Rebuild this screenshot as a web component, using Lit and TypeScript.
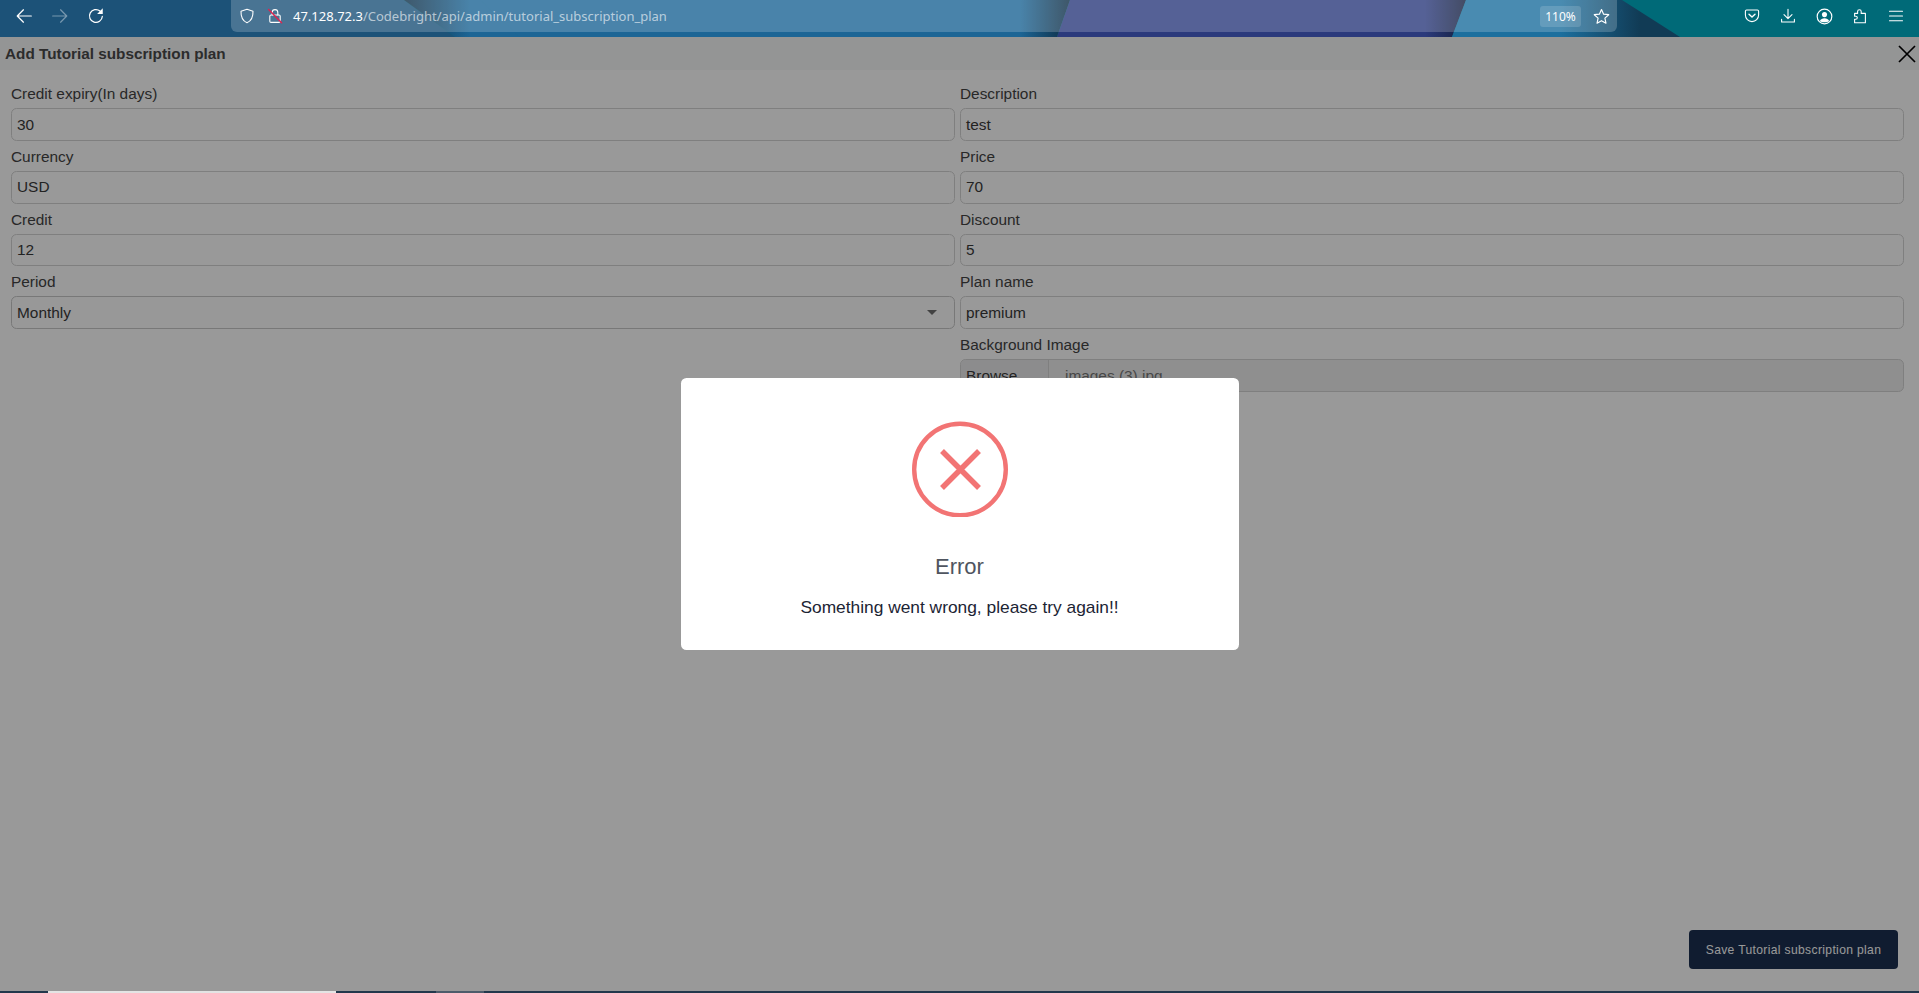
import { LitElement, html, css, svg } from 'lit';
import { customElement } from 'lit/decorators.js';

const leftFields = [
  { label: 'Credit expiry(In days)', value: '30' },
  { label: 'Currency', value: 'USD' },
  { label: 'Credit', value: '12' },
];

const rightFields = [
  { label: 'Description', value: 'test' },
  { label: 'Price', value: '70' },
  { label: 'Discount', value: '5' },
  { label: 'Plan name', value: 'premium' },
];

const icon = (body: unknown, size = 18) => html`
  <svg width=${size} height=${size} viewBox="0 0 16 16" fill="none" stroke="currentColor" stroke-width="1.1" stroke-linecap="round" stroke-linejoin="round">${body}</svg>
`;

const icons = {
  back: svg`<path d="M2 8h12.5M7.5 2.5 2 8l5.5 5.5"/>`,
  forward: svg`<path d="M14 8H1.5M8.5 2.5 14 8l-5.5 5.5"/>`,
  reload: svg`<path d="M13.6 8.4A5.7 5.7 0 1 1 11.6 3.6"/><path d="M14 1.2v5h-5z" fill="currentColor" stroke="none"/>`,
  shield: svg`<path d="M8 1.2 14 3.2C14.2 9 12 13 8 14.8 4 13 1.8 9 2 3.2Z"/>`,
  lock: svg`<path d="M5.2 7V4.4a2.8 2.8 0 0 1 5.6 0V7"/><rect x="2.8" y="7" width="10.4" height="7.4" rx="1.2"/><path d="M1.6 1.4 14.6 14.8" stroke="#e0224f" stroke-width="1.4"/>`,
  star: svg`<path d="M8 1.4 10 5.8 14.8 6.3 11.2 9.5 12.2 14.3 8 11.9 3.8 14.3 4.8 9.5 1.2 6.3 6 5.8Z"/>`,
  pocket: svg`<path d="M2.6 2h10.8c.7 0 1.2.5 1.2 1.2V7a6.6 6.6 0 0 1-13.2 0V3.2C1.4 2.5 1.9 2 2.6 2Z"/><path d="M5 6.2 8 9l3-2.8" stroke-width="1.4"/>`,
  download: svg`<path d="M8 1.2v9M4 6.6l4 4 4-4M1.6 11.4v2.6h12.8v-2.6"/>`,
  account: svg`<circle cx="8" cy="8" r="6.9"/><circle cx="8" cy="6.2" r="2.4" fill="currentColor" stroke="none"/><path d="M3.6 12.2c.9-1.8 2.4-2.6 4.4-2.6s3.5.8 4.4 2.6C11 13.8 5 13.8 3.6 12.2Z" fill="currentColor" stroke="none"/>`,
  extension: svg`<path d="M2.6 14.8V11.2h1.2a1.5 1.5 0 0 0 0-3H2.6V5.4h3V3.6a1.8 1.8 0 0 1 3.6 0v1.8h4.2v9.4Z"/>`,
  menu: svg`<path d="M1.5 3.2h13M1.5 8h13M1.5 12.8h13"/>`,
};

@customElement('app-root')
export class AppRoot extends LitElement {
  static styles = css`
    :host {
      display: flex;
      flex-direction: column;
      height: 993px;
      overflow: hidden;
      font-family: "Liberation Sans", Arial, sans-serif;
      background: #fff;
    }

    .toolbar {
      position: relative;
      display: flex;
      align-items: flex-start;
      flex: 0 0 37px;
      height: 37px;
      padding-left: 6px;
      padding-right: 5px;
      box-sizing: border-box;
      color: #fff;
      background: #1c5278;
    }

    .theme {
      position: absolute;
      inset: 0;
    }

    .tool {
      position: relative;
      display: flex;
      align-items: center;
      justify-content: center;
      width: 36px;
      height: 32px;
    }

    .tool.off {
      opacity: 0.4;
    }

    .urlbar {
      position: relative;
      display: flex;
      align-items: center;
      width: 1386px;
      height: 32px;
      margin-left: 117px;
      padding-left: 2px;
      box-sizing: border-box;
      border-radius: 0 0 6px 6px;
      background: rgba(255, 255, 255, 0.2);
      font-family: "Noto Sans", sans-serif;
      font-size: 13px;
    }

    .urlbar .site-icon {
      display: flex;
      width: 28px;
      justify-content: center;
      flex: none;
    }

    .url {
      margin-left: 4px;
      white-space: nowrap;
      color: rgba(255, 255, 255, 0.62);
    }

    .url b {
      font-weight: 400;
      color: #fff;
    }

    .zoom {
      margin-left: auto;
      width: 41px;
      height: 21px;
      line-height: 21px;
      text-align: center;
      font-size: 12px;
      border-radius: 3px;
      background: rgba(255, 255, 255, 0.15);
    }

    .star {
      display: flex;
      justify-content: center;
      width: 40px;
      margin-right: -4px;
    }

    .actions {
      position: relative;
      display: flex;
      margin-left: auto;
    }

    .main {
      position: relative;
      flex: 1;
      display: flex;
      flex-direction: column;
      min-height: 0;
      background: #fff;
    }

    .head {
      display: flex;
      align-items: center;
      justify-content: space-between;
      flex: 0 0 33px;
      padding: 0 3px 0 5px;
      background: #f7f8f9;
      color: #4a4a4a;
      font-size: 15.3px;
      font-weight: 700;
    }

    .close {
      display: flex;
      color: #000;
    }

    .form {
      display: grid;
      grid-template-columns: 944px 944px;
      column-gap: 5px;
      padding: 8.4px 0 0 11px;
    }

    .col {
      display: flex;
      flex-direction: column;
    }

    .field {
      height: 62.7px;
    }

    label {
      display: block;
      height: 30px;
      line-height: 31px;
      font-size: 15.4px;
      color: #444;
    }

    .control {
      display: flex;
      align-items: center;
      height: 32.7px;
      padding-left: 5px;
      box-sizing: border-box;
      border: 1.5px solid #d4d4d4;
      border-radius: 5.5px;
      font-size: 15.4px;
      color: #3a3a3a;
      background: #fff;
    }

    .select {
      justify-content: space-between;
      padding-right: 17px;
      border-color: #c8c8c8;
      background: #fdfdfd;
    }

    .caret {
      width: 0;
      height: 0;
      border-left: 5px solid transparent;
      border-right: 5px solid transparent;
      border-top: 5px solid #6e6e6e;
    }

    .file {
      padding-left: 0;
      overflow: hidden;
      background: #eeeeee;
    }

    .browse {
      display: flex;
      align-items: center;
      height: 100%;
      width: 88px;
      padding: 2px 0 0 5px;
      box-sizing: border-box;
      border-right: 1.5px solid #d4d4d4;
      background: #eaeaec;
    }

    .filename {
      margin-left: 16px;
      padding-top: 2px;
      color: #777;
    }

    .footer {
      margin-top: auto;
      display: flex;
      justify-content: flex-end;
      padding: 0 21px 22px 0;
    }

    .save {
      display: flex;
      align-items: center;
      justify-content: center;
      width: 209px;
      height: 39px;
      border-radius: 4px;
      font-size: 12.1px;
      letter-spacing: 0.35px;
      color: #fff;
      background: #1c2f50;
    }

    .overlay {
      position: absolute;
      inset: 0;
      display: flex;
      align-items: center;
      justify-content: center;
      background: rgba(0, 0, 0, 0.4);
    }

    .modal {
      display: flex;
      flex-direction: column;
      align-items: center;
      width: 558px;
      height: 272px;
      padding-top: 43px;
      box-sizing: border-box;
      border-radius: 5.5px;
      background: #fff;
    }

    .ring {
      display: block;
    }

    .title {
      margin-top: 37px;
      height: 26px;
      line-height: 26px;
      font-size: 22px;
      color: #4f5560;
    }

    .message {
      margin-top: 15px;
      line-height: 24px;
      font-size: 17.35px;
      color: #1c2434;
    }

    .taskbar {
      position: relative;
      flex: 0 0 2px;
      background: #22384c;
    }

    .taskbar i {
      position: absolute;
      top: 0;
      bottom: 0;
    }

    .taskbar .active {
      left: 48px;
      width: 288px;
      background: #e4e4e4;
    }

    .taskbar .open {
      left: 436px;
      width: 48px;
      background: #4d5c6b;
    }
  `;

  private renderField(f: { label: string; value: string }) {
    return html`
      <div class="field">
        <label>${f.label}</label>
        <div class="control">${f.value}</div>
      </div>
    `;
  }

  private renderToolbar() {
    return html`
      <div class="toolbar">
        <svg class="theme" width="1919" height="37" viewBox="0 0 1919 37">
          <defs>
            <linearGradient id="shadeA" x1="404" y1="0" x2="470" y2="0" gradientUnits="userSpaceOnUse">
              <stop offset="0" stop-color="#0f2f47" />
              <stop offset="1" stop-color="#1c6595" />
            </linearGradient>
            <linearGradient id="shadeB" x1="1020" y1="0" x2="1068" y2="0" gradientUnits="userSpaceOnUse">
              <stop offset="0" stop-color="#1c6595" />
              <stop offset="1" stop-color="#0f2f47" />
            </linearGradient>
            <linearGradient id="shadeC" x1="1425" y1="0" x2="1466" y2="0" gradientUnits="userSpaceOnUse">
              <stop offset="0" stop-color="#2b3a7c" />
              <stop offset="1" stop-color="#15203f" />
            </linearGradient>
            <linearGradient id="shadeD" x1="1560" y1="0" x2="1640" y2="0" gradientUnits="userSpaceOnUse">
              <stop offset="0" stop-color="#1c6f9e" />
              <stop offset="1" stop-color="#113b55" />
            </linearGradient>
          </defs>
          <rect width="1919" height="37" fill="#006a78" />
          <polygon points="0,0 404,0 455,37 0,37" fill="#1c5278" />
          <polygon points="404,0 500,0 551,37 455,37" fill="url(#shadeA)" />
          <polygon points="480,0 1030,0 1030,37 520,37" fill="#1c6595" />
          <polygon points="1020,0 1070,0 1057,37 1020,37" fill="url(#shadeB)" />
          <polygon points="1070,0 1466,0 1452,37 1057,37" fill="url(#shadeC)" />
          <polygon points="1466,0 1622,0 1680,37 1452,37" fill="url(#shadeD)" />
        </svg>
        <div class="tool">${icon(icons.back)}</div>
        <div class="tool off">${icon(icons.forward)}</div>
        <div class="tool">${icon(icons.reload)}</div>
        <div class="urlbar">
          <span class="site-icon">${icon(icons.shield, 16)}</span>
          <span class="site-icon">${icon(icons.lock, 16)}</span>
          <span class="url"><b>47.128.72.3</b>/Codebright/api/admin/tutorial_subscription_plan</span>
          <span class="zoom">110%</span>
          <span class="star">${icon(icons.star, 17)}</span>
        </div>
        <div class="actions">
          <div class="tool">${icon(icons.pocket, 16)}</div>
          <div class="tool">${icon(icons.download, 16)}</div>
          <div class="tool">${icon(icons.account, 17)}</div>
          <div class="tool">${icon(icons.extension, 16)}</div>
          <div class="tool">${icon(icons.menu, 16)}</div>
        </div>
      </div>
    `;
  }

  render() {
    return html`
      ${this.renderToolbar()}
      <div class="main">
        <div class="head">
          <span>Add Tutorial subscription plan</span>
          <span class="close">
            <svg width="18" height="18" viewBox="0 0 18 18" stroke="currentColor" stroke-width="1.7"><path d="M1 1l16 16M17 1 1 17" /></svg>
          </span>
        </div>
        <div class="form">
          <div class="col">
            ${leftFields.map((f) => this.renderField(f))}
            <div class="field">
              <label>Period</label>
              <div class="control select">Monthly<span class="caret"></span></div>
            </div>
          </div>
          <div class="col">
            ${rightFields.map((f) => this.renderField(f))}
            <div class="field">
              <label>Background Image</label>
              <div class="control file">
                <span class="browse">Browse</span>
                <span class="filename">images (3).jpg</span>
              </div>
            </div>
          </div>
        </div>
        <div class="footer"><div class="save">Save Tutorial subscription plan</div></div>
        <div class="overlay">
          <div class="modal">
            <svg class="ring" width="96" height="96" viewBox="0 0 96 96" fill="none" stroke="#f27474">
              <circle cx="48" cy="48.5" r="45.8" stroke-width="4.4" />
              <path d="M30 30 67 67M67 30 30 67" stroke-width="5.5" />
            </svg>
            <div class="title">Error</div>
            <div class="message">Something went wrong, please try again!!</div>
          </div>
        </div>
      </div>
      <div class="taskbar"><i class="active"></i><i class="open"></i></div>
    `;
  }
}
